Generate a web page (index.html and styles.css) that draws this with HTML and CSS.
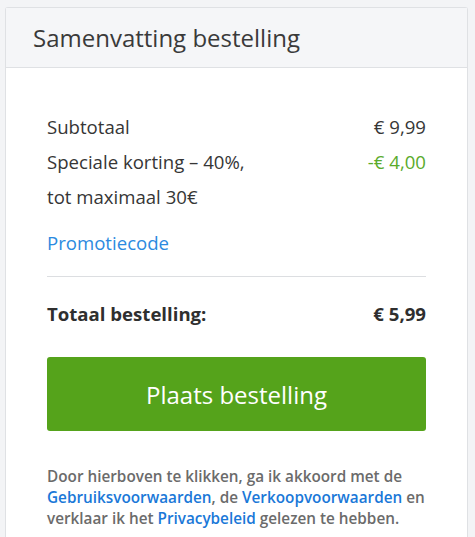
FILE: index.html
```html
<!DOCTYPE html>
<html lang="nl">
<head>
<meta charset="utf-8">
<link rel="stylesheet" href="styles.css">
</head>
<body>
<div class="card">
  <div class="card-header">
    <h2 class="title">Samenvatting bestelling</h2>
  </div>
  <div class="card-body">
    <div class="row">
      <span>Subtotaal</span>
      <span>€ 9,99</span>
    </div>
    <div class="row">
      <span>Speciale korting – 40%,<br>tot maximaal 30€</span>
      <span class="discount">-€ 4,00</span>
    </div>
    <a class="promo" href="#">Promotiecode</a>
    <div class="divider"></div>
    <div class="row total">
      <span>Totaal bestelling:</span>
      <span>€ 5,99</span>
    </div>
    <button class="order-btn">Plaats bestelling</button>
    <p class="legal">Door hierboven te klikken, ga ik akkoord met de <a href="#">Gebruiksvoorwaarden</a>, de <a href="#">Verkoopvoorwaarden</a> en verklaar ik het <a href="#">Privacybeleid</a> gelezen te hebben.</p>
  </div>
</div>
</body>
</html>
```
FILE: styles.css
```css
html, body {
  margin: 0;
  padding: 0;
  background: #f3f4f6;
  font-family: "Open Sans", "Liberation Sans", sans-serif;
  color: #363636;
}
.card {
  margin: 7px 7px 0 5px;
  background: #fff;
  border: 1px solid #dfe1e4;
  border-bottom: none;
  border-radius: 3px 3px 0 0;
  min-height: 540px;
}
.card-header {
  background: #f5f6f8;
  border-bottom: 1px solid #dfe1e4;
  height: 59px;
  padding: 0 27px;
  display: flex;
  align-items: center;
}
.title {
  margin: 0;
  font-weight: 400;
  font-size: 24px;
  color: #3a3a3a;
}
.card-body {
  padding: 41px 41px 0 41px;
}
.row {
  display: flex;
  justify-content: space-between;
  font-size: 18.6px;
  line-height: 35px;
}
.discount {
  color: #5aab2c;
}
.promo {
  display: block;
  margin-top: 17px;
  font-size: 18.6px;
  line-height: 24px;
  color: #2b8ae0;
  text-decoration: none;
}
.divider {
  border-top: 1px solid #dcdee1;
  margin-top: 21px;
}
.total {
  margin-top: 19px;
  font-weight: 700;
  color: #2f2f2f;
}
.order-btn {
  display: block;
  width: 100%;
  margin-top: 26px;
  height: 74px;
  border: none;
  border-radius: 3px;
  background: #55a31b;
  color: #fff;
  font-family: inherit;
  font-size: 24px;
  cursor: pointer;
}
.legal {
  margin: 35px 0 0 0;
  font-size: 15.3px;
  line-height: 21px;
  font-weight: 600;
  color: #6b6b6b;
}
.legal a {
  color: #1a78d8;
  text-decoration: none;
}
```
